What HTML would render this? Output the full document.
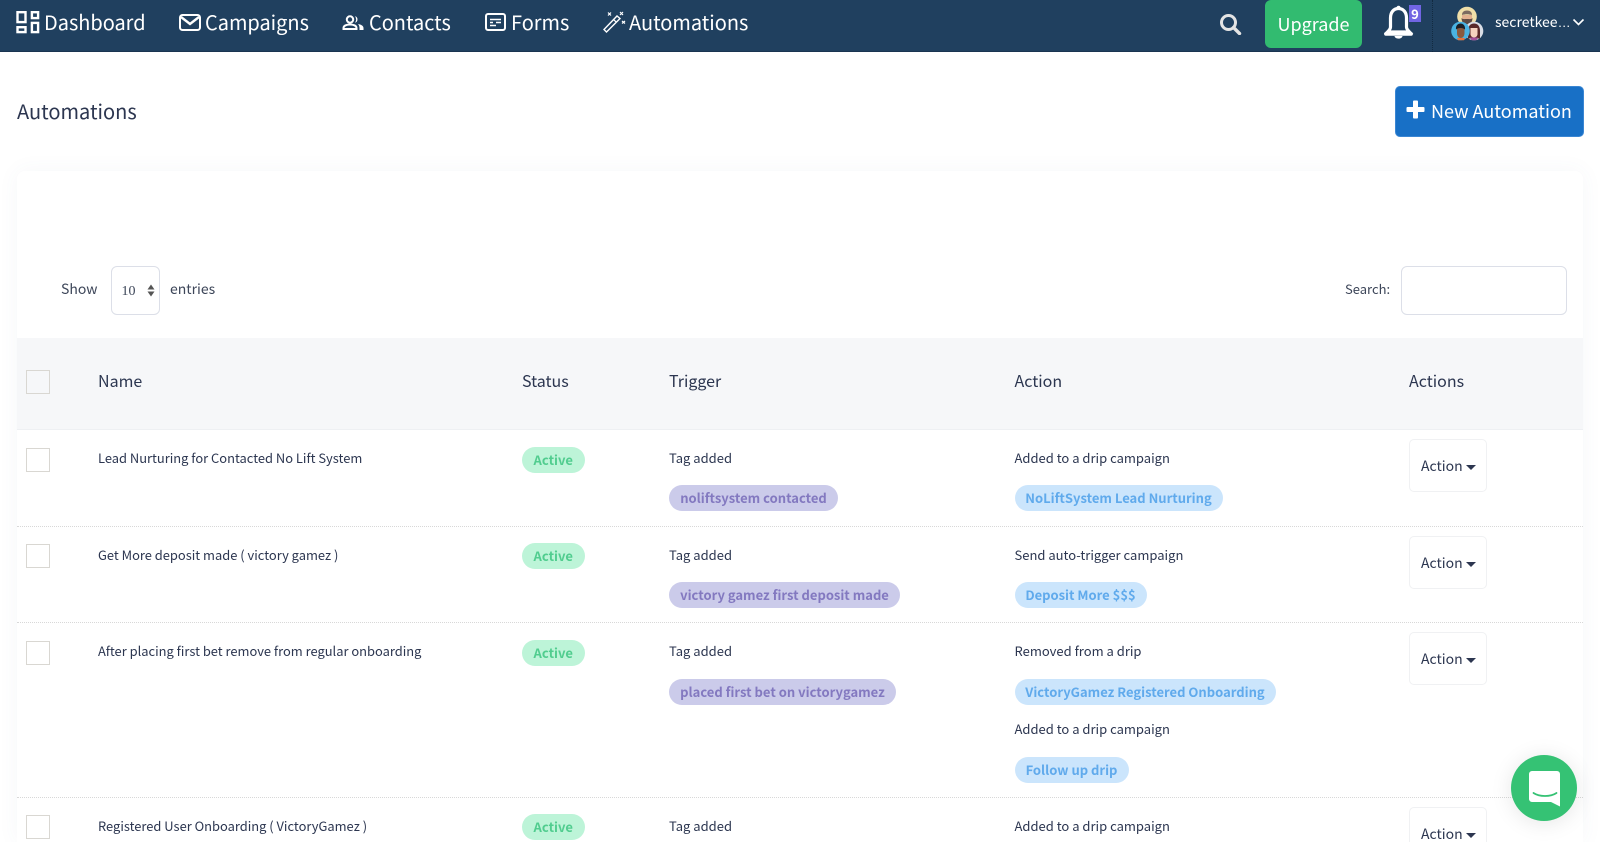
<!DOCTYPE html>
<html><head><meta charset="utf-8"><title>Automations</title>
<style>
*{box-sizing:border-box}
html,body{margin:0;padding:0;width:1600px;height:842px;overflow:hidden;background:#fff}
body{position:relative;font-family:"Noto Sans CJK JP","Liberation Sans",sans-serif;color:#2c3650}
.a{position:absolute;white-space:nowrap}
.t{position:absolute;white-space:nowrap;line-height:20px;height:20px}
.nav{color:#fff;font-size:19.95px;line-height:30px;height:30px;top:7px}
.cb{position:absolute;left:26px;width:24px;height:24px;border:1px solid #d9d7d2;background:#fff}
.n{font-size:12.9px;color:#2c3650;left:98px;margin-top:-.5px}
.h{font-size:16px;color:#2c3650;top:369.5px}
.p{position:absolute;height:26px;border-radius:13px;font-size:13px;font-weight:700;line-height:26px;white-space:nowrap;text-align:center}
.s{left:522px;width:62.5px;background:#bdf4d8;color:#51cd8f}
.g{left:669px;background:#cbcbea;color:#8379c0}
.b{left:1014.5px;background:#cbe5fc;color:#60aaec}
.d{font-size:13px;margin-top:-.5px}
.btn{position:absolute;left:1409px;width:78px;height:53px;border:1px solid #f0f1f3;border-radius:5px;background:#fff;font-size:14px;line-height:53px;padding-left:11px;color:#2c3650;white-space:nowrap}
.btn i{display:inline-block;width:0;height:0;border-left:5px solid transparent;border-right:5px solid transparent;border-top:5px solid #2c3650;margin-left:3px;vertical-align:1px}
.sep{position:absolute;left:17px;width:1566px;height:1px;border-top:1px dotted #d8d8d8}
</style></head>
<body>
<div class="a" style="left:0;top:0;width:1600px;height:52px;background:#20405f;border-bottom:1px solid #1a3450"></div>

<svg class="a" style="left:16px;top:10px" width="24" height="24" viewBox="0 0 24 24" fill="none" stroke="#fff" stroke-width="2.4"><rect x="1.5" y="2.2" width="8" height="9.9"/><rect x="15.9" y="2.2" width="6.2" height="5.9"/><rect x="1.5" y="17.2" width="8" height="4.9"/><rect x="15.9" y="12.9" width="6.2" height="9.2"/></svg>
<div class="a nav" style="left:44px">Dashboard</div>

<svg class="a" style="left:179px;top:14px" width="22" height="17" viewBox="0 0 22 17" fill="none" stroke="#fff" stroke-width="2"><rect x="1" y="1" width="20" height="15" rx="2.5"/><path d="M2 3l9 7 9-7" stroke-width="2.4"/></svg>
<div class="a nav" style="left:205px">Campaigns</div>

<svg class="a" style="left:342px;top:15px" width="22" height="16" viewBox="0 0 22 16" fill="#fff"><circle cx="8" cy="4.5" r="3.2" fill="none" stroke="#fff" stroke-width="2"/><path d="M1.5 14v-1c0-2.5 3.500-3.500 6.500-3.500s6.500 1 6.500 3.500v1z" fill="none" stroke="#fff" stroke-width="2"/><path d="M13 1.300a3.300 3.300 0 0 1 0 6.400 5 5 0 0 0 0-6.400zM16 9c3 .5 5.500 1.800 5.500 4v2h-4v-2c0-1.500-.5-3-1.500-4z"/></svg>
<div class="a nav" style="left:369px">Contacts</div>

<svg class="a" style="left:485px;top:13px" width="21" height="18" viewBox="0 0 21 18" fill="none" stroke="#fff" stroke-width="2"><rect x="1" y="1" width="19" height="16" rx="2"/><path d="M5 6.500h11M5 9.500h3M11 9.500h5M5 12.500h6" stroke-width="1.500"/></svg>
<div class="a nav" style="left:511px">Forms</div>

<svg class="a" style="left:602px;top:11px" width="24" height="22" viewBox="0 0 24 22" fill="none" stroke="#fff"><path d="M2 18.500L15 5l3 2.500L4.500 21z" stroke-width="1.400"/><path d="M11.500 8.500l3 2.800" stroke-width="1.200"/><path d="M6 1.500l3 3M9 1.500l-3 3M18 1l3 3M21 1l-3 3M20 10l3 2.500M23 10l-3 2.500" stroke-width="1.200"/></svg>
<div class="a nav" style="left:629px">Automations</div>

<svg class="a" style="left:1219px;top:13px" width="23" height="22" viewBox="0 0 23 22" fill="none" stroke="#e4e4e4"><circle cx="9.500" cy="9.500" r="7" stroke-width="3"/><path d="M14.500 14.500l6 6" stroke-width="3.400" stroke-linecap="round"/></svg>

<div class="a" style="left:1265px;top:0;width:97px;height:48px;background:#32bb70;border-radius:6px;color:#fff;font-size:18px;line-height:49px;text-align:center">Upgrade</div>

<svg class="a" style="left:1384px;top:5px" width="30" height="36" viewBox="0 0 30 36" fill="none" stroke="#fff"><path d="M14.500 3.500c-5 0-8 4-8 9.500v9c0 2-1.500 3.500-3 5h22c-1.500-1.500-3-3-3-5v-9c0-5.500-3-9.500-8-9.500z" stroke-width="3.200"/><path d="M1.800 29h25.400" stroke-width="3.400" stroke-linecap="round"/><circle cx="14.500" cy="2.800" r="2" fill="#fff" stroke="none"/><path d="M10.500 31h8c-.5 3.500-7.500 3.500-8 0z" fill="#fff" stroke="none"/></svg>
<div class="a" style="left:1409px;top:5px;width:12px;height:17px;background:#7165e3;color:#fff;font-size:13px;font-weight:700;line-height:17px;text-align:center">9</div>

<div class="a" style="left:1432px;top:0;width:0;height:52px;border-left:1px dotted #122a40"></div>

<svg class="a" style="left:1451px;top:6px" width="33" height="35" viewBox="0 0 33 35">
<circle cx="16" cy="10.500" r="9.800" fill="#f0dfa9"/>
<path d="M11 9h10v4c0 4-2 5.500-5 5.500S11 17 11 13z" fill="#e3b08f"/>
<path d="M10.500 12c1 1.500 3 1 5.500 1s4.500.5 5.500-1c0 3.500-2 6.500-5.500 6.500s-5.500-3-5.500-6.500z" fill="#5d4a43"/>
<path d="M11 9c0-3 2-4.500 5-4.500S21 6 21 9c-3-1-7-1-10 0z" fill="#7c6a60"/>
<path d="M10 20h12v4H10z" fill="#e8743c"/>
<circle cx="23" cy="25" r="9.300" fill="#d9dee6"/>
<path d="M17 25c0-5 2.500-7.500 6-7.500s6 2.500 6 7.500v7.500H17z" fill="#5a2a2a"/>
<path d="M19.500 22h7v6c0 2-1.500 3.500-3.500 3.500s-3.500-1.500-3.500-3.500z" fill="#f6d3bf"/>
<path d="M19 31.500h8l-1.500 2.800h-5z" fill="#a14f9a"/>
<circle cx="9.500" cy="25" r="9.300" fill="#4ab3e2"/>
<path d="M6 21h7.500v6c0 3-1.500 5-3.800 5S6 30 6 27z" fill="#8a5a3f"/>
<path d="M5 23.500c-.5-4 2-6 4.500-6s5 2 4.500 6c-2-2-7-2-9 0z" fill="#1d1f26"/>
<path d="M6 32h8l-1 2.300H7z" fill="#e8743c"/>
</svg>

<div class="a" style="left:1495px;top:11px;font-size:14px;line-height:22px;color:#fff">secretkee<span style="font-family:'Liberation Sans',sans-serif;font-size:13px">…</span></div>
<svg class="a" style="left:1572px;top:18px" width="13" height="9" viewBox="0 0 13 9" fill="none" stroke="#fff" stroke-width="1.600"><path d="M1.500 1.500l5 5 5-5"/></svg>

<div class="a" style="left:17px;top:96px;font-size:20px;line-height:30px;color:#2c3650">Automations</div>

<div class="a" style="left:1395px;top:85.500px;width:189px;height:51px;background:#1870c6;border-radius:5px;border:1px solid #3a86d3"></div>
<svg class="a" style="left:1406px;top:100px" width="19" height="19" viewBox="0 0 19 19"><path d="M7 1.500a1 1 0 0 1 1-1h3a1 1 0 0 1 1 1V7h5.500a1 1 0 0 1 1 1v3a1 1 0 0 1-1 1H12v5.500a1 1 0 0 1-1 1H8a1 1 0 0 1-1-1V12H1.500a1 1 0 0 1-1-1V8a1 1 0 0 1 1-1H7z" fill="#fff"/></svg>
<div class="a" style="left:1431px;top:96px;font-size:18px;line-height:30px;color:#fff">New Automation</div>

<div class="a" style="left:17px;top:171px;width:1566px;height:671px;background:#fff;border-radius:8px 8px 0 0;box-shadow:0 0 22px rgba(80,100,140,.05)"></div>

<div class="t" style="left:61px;top:279px;font-size:14px;color:#3d4659">Show</div>
<div class="a" style="left:111px;top:265.500px;width:49px;height:49.500px;border:1px solid #dcdfe8;border-radius:6px;background:#fff"></div>
<div class="t" style="left:121.500px;top:282px;font-size:14px;color:#3d4659;font-family:'Liberation Serif',serif">10</div>
<svg class="a" style="left:147px;top:284px" width="8" height="13" viewBox="0 0 8 13" fill="#555"><path d="M4 .5L7.500 5.500H.5zM4 12.500L.5 7.500h7z"/></svg>
<div class="t" style="left:170px;top:279px;font-size:14px;color:#3d4659">entries</div>

<div class="t" style="left:1345px;top:279px;font-size:13px;color:#3d4659">Search:</div>
<div class="a" style="left:1401px;top:265.500px;width:165.500px;height:49.500px;border:1px solid #dcdfe8;border-radius:6px;background:#fff"></div>

<div class="a" style="left:17px;top:338px;width:1566px;height:91.500px;background:#f6f7f9;border-bottom:1px solid #eef0f3"></div>
<div class="cb" style="top:370px;background:#f6f7f9"></div>
<div class="t h" style="left:98px">Name</div>
<div class="t h" style="left:522px">Status</div>
<div class="t h" style="left:669px">Trigger</div>
<div class="t h" style="left:1014.500px">Action</div>
<div class="t h" style="left:1409px">Actions</div>

<!-- Row 1 -->
<div class="cb" style="top:448px"></div>
<div class="t n" style="top:448px">Lead Nurturing for Contacted No Lift System</div>
<div class="p s" style="top:446.500px">Active</div>
<div class="t d" style="left:669px;top:448px">Tag added</div>
<div class="p g" style="top:485px;width:169px">noliftsystem contacted</div>
<div class="t d" style="left:1014.500px;top:448px">Added to a drip campaign</div>
<div class="p b" style="top:485px;width:208px">NoLiftSystem Lead Nurturing</div>
<div class="btn" style="top:439px">Action<i></i></div>
<div class="sep" style="top:526px"></div>

<!-- Row 2 -->
<div class="cb" style="top:544px"></div>
<div class="t n" style="top:545px">Get More deposit made ( victory gamez )</div>
<div class="p s" style="top:543px">Active</div>
<div class="t d" style="left:669px;top:545px">Tag added</div>
<div class="p g" style="top:582px;width:231px">victory gamez first deposit made</div>
<div class="t d" style="left:1014.500px;top:545px">Send auto-trigger campaign</div>
<div class="p b" style="top:582px;width:132px">Deposit More $$$</div>
<div class="btn" style="top:535.500px">Action<i></i></div>
<div class="sep" style="top:622px"></div>

<!-- Row 3 -->
<div class="cb" style="top:641px"></div>
<div class="t n" style="top:641px">After placing first bet remove from regular onboarding</div>
<div class="p s" style="top:639.500px">Active</div>
<div class="t d" style="left:669px;top:641px">Tag added</div>
<div class="p g" style="top:678.500px;width:227px">placed first bet on victorygamez</div>
<div class="t d" style="left:1014.500px;top:641px">Removed from a drip</div>
<div class="p b" style="top:678.500px;width:261px">VictoryGamez Registered Onboarding</div>
<div class="t d" style="left:1014.500px;top:719px">Added to a drip campaign</div>
<div class="p b" style="top:756.500px;width:114px">Follow up drip</div>
<div class="btn" style="top:632px">Action<i></i></div>
<div class="sep" style="top:796.500px"></div>

<!-- Row 4 -->
<div class="cb" style="top:815px"></div>
<div class="t n" style="top:816px">Registered User Onboarding ( VictoryGamez )</div>
<div class="p s" style="top:814px">Active</div>
<div class="t d" style="left:669px;top:816px">Tag added</div>
<div class="t d" style="left:1014.500px;top:816px">Added to a drip campaign</div>
<div class="btn" style="top:807px">Action<i></i></div>

<!-- Chat -->
<div class="a" style="left:1511px;top:755px;width:66px;height:66px;border-radius:50%;background:#35c274;box-shadow:0 2px 22px rgba(0,0,0,.10)"></div>
<svg class="a" style="left:1528px;top:770px" width="33" height="37" viewBox="0 0 33 37"><path d="M4 1h25a3 3 0 0 1 3 3v32.500l-9-4.500H4a3 3 0 0 1-3-3V4a3 3 0 0 1 3-3z" fill="#fff"/><path d="M5.500 23c6 4 17 4 23 0" fill="none" stroke="#35c274" stroke-width="1.800" stroke-linecap="round"/></svg>
</body></html>
